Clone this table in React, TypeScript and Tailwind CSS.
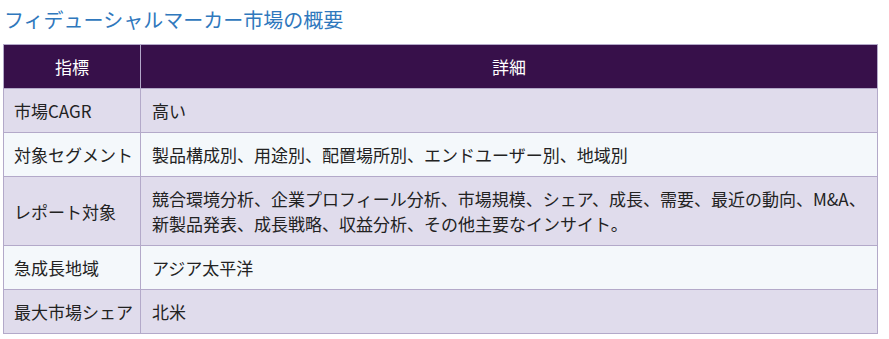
const rows = [
  { k: "市場CAGR", v: "高い" },
  { k: "対象セグメント", v: "製品構成別、用途別、配置場所別、エンドユーザー別、地域別" },
  {
    k: "レポート対象",
    v: "競合環境分析、企業プロフィール分析、市場規模、シェア、成長、需要、最近の動向、M&A、新製品発表、成長戦略、収益分析、その他主要なインサイト。",
  },
  { k: "急成長地域", v: "アジア太平洋" },
  { k: "最大市場シェア", v: "北米" },
];

export default function App() {
  return (
    <div
      className="bg-white px-[3px] w-[889px] h-[339px]"
      style={{ fontFamily: '"Noto Sans CJK JP", "Noto Sans", sans-serif' }}
    >
      <h2 className="pt-[5px] pl-[1px] mb-[9px] text-[20px] leading-[30px] text-[#2f78bd] font-normal">
        フィデューシャルマーカー市場の概要
      </h2>
      <table className="w-[875px] border-collapse text-[17px] leading-[25px] text-[#222]">
        <thead>
          <tr className="bg-[#37104a] text-white">
            <th className="w-[137px] border border-[#b3a9c9] py-[9px] font-normal text-center">指標</th>
            <th className="border border-[#b3a9c9] py-[9px] font-normal text-center">詳細</th>
          </tr>
        </thead>
        <tbody>
          {rows.map((r, i) => (
            <tr key={r.k} className={i % 2 === 0 ? "bg-[#e0dcec]" : "bg-[#f4f8fb]"}>
              <td className="border border-[#b3a9c9] py-[9px] pl-[10px] pr-[4px] whitespace-nowrap">{r.k}</td>
              <td className="border border-[#b3a9c9] py-[9px] pl-[11px] pr-[10px]">{r.v}</td>
            </tr>
          ))}
        </tbody>
      </table>
    </div>
  );
}
